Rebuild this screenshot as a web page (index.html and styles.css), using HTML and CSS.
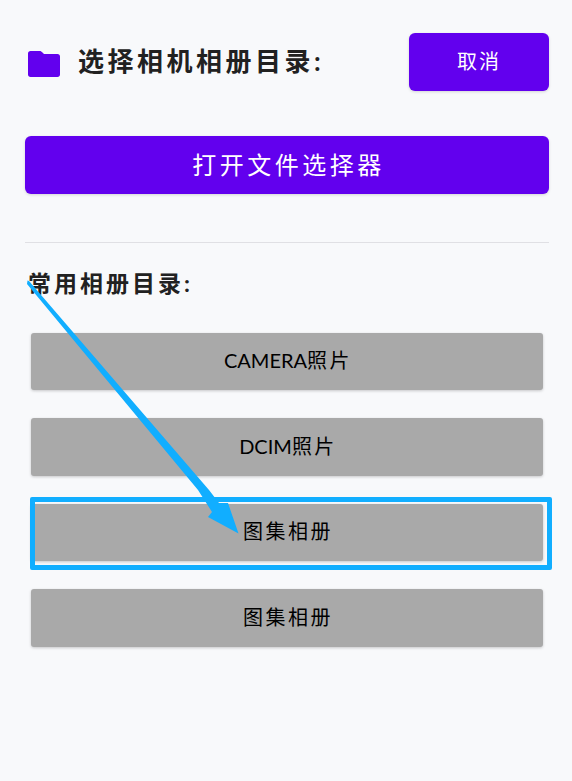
FILE: index.html
```html
<!DOCTYPE html>
<html lang="zh-CN">
<head>
  <meta charset="UTF-8">
  <meta name="viewport" content="width=device-width, initial-scale=1">
  <title>选择相机相册目录</title>
  <link rel="stylesheet" href="styles.css">
</head>
<body>
  <div class="page">
    <div class="header">
      <svg class="folder-icon" viewBox="0 0 32 26" width="32" height="26">
        <path d="M2.500 0h9c1.400 0 2.200 .6 3 1.500L16 3h13.500C31 3 32 4 32 5.500v18c0 1.500-1 2.500-2.500 2.500h-27C1 26 0 25 0 23.500v-21C0 1 1 0 2.500 0z" fill="#6200ee"/>
      </svg>
      <h1 class="title">选择相机相册目录:</h1>
      <button class="btn btn-cancel">取消</button>
    </div>

    <button class="btn btn-open">打开文件选择器</button>

    <div class="divider"></div>

    <h2 class="subtitle">常用相册目录:</h2>

    <div class="album-list">
      <button class="album-item"><span class="latin">CAMERA</span>照片</button>
      <button class="album-item"><span class="latin">DCIM</span>照片</button>
      <button class="album-item">图集相册</button>
      <button class="album-item">图集相册</button>
    </div>
  </div>

  <!-- 标注层 -->
  <div class="highlight-box"></div>
  <svg class="arrow" viewBox="0 0 572 781" width="572" height="781">
    <polygon points="27.500,280.500 29,281 209,490 219,503 228,503 238.500,533.500 208,517 212,512 198,490 27,284" fill="#11aeff"/>
  </svg>
</body>
</html>
```

FILE: styles.css
```css
* {
  box-sizing: border-box;
  margin: 0;
  padding: 0;
}

html, body {
  height: 100%;
}

body {
  background-color: #f8f9fb;
  font-family: "Lato", "Noto Sans CJK SC", sans-serif;
  position: relative;
  overflow: hidden;
}

.page {
  padding: 33px 23px 0 25px;
}

.header {
  display: flex;
  align-items: center;
  height: 58px;
}

.folder-icon {
  margin-left: 3px;
  margin-top: 3px;
  flex-shrink: 0;
}

.title {
  flex: 1;
  margin-left: 18px;
  margin-top: -5px;
  font-size: 26px;
  font-weight: 700;
  letter-spacing: 3.500px;
  color: #212121;
}

.btn {
  background-color: #6200ee;
  color: #ffffff;
  border: none;
  border-radius: 6px;
  box-shadow: 0 1px 3px rgba(0, 0, 0, 0.15);
  font-family: inherit;
}

.btn-cancel {
  width: 140px;
  height: 58px;
  padding-bottom: 4px;
  font-size: 20px;
  letter-spacing: 2px;
}

.btn-open {
  display: block;
  width: 100%;
  height: 58px;
  margin-top: 45px;
  padding-bottom: 4px;
  padding-left: 3px;
  font-size: 24px;
  letter-spacing: 3.500px;
}

.divider {
  height: 1px;
  margin-top: 48px;
  background-color: #e0e0e4;
}

.subtitle {
  margin-top: 24px;
  margin-left: 3px;
  font-size: 23px;
  line-height: 32px;
  font-weight: 700;
  letter-spacing: 3px;
  color: #212121;
}

.album-list {
  display: flex;
  flex-direction: column;
  gap: 28px;
  margin-top: 33.500px;
  padding: 0 6px;
}

.album-item {
  height: 57.500px;
  padding-bottom: 3px;
  padding-left: 2px;
  background-color: #a9a9a9;
  color: #000000;
  border: none;
  border-radius: 3px;
  box-shadow: 0 1px 3px rgba(0, 0, 0, 0.2);
  font-family: inherit;
  font-size: 20px;
  letter-spacing: 2.500px;
}

.latin {
  letter-spacing: 0;
}

.highlight-box {
  position: absolute;
  left: 30px;
  top: 497px;
  width: 522px;
  height: 73px;
  border: 5px solid #11aeff;
  border-radius: 2px;
}

.arrow {
  position: absolute;
  left: 0;
  top: 0;
  pointer-events: none;
}
```
